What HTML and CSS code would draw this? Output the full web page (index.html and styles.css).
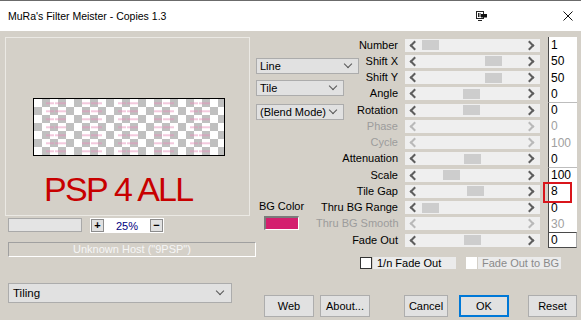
FILE: index.html
```html
<!DOCTYPE html>
<html>
<head>
	<meta charset="utf-8">
	<title>MuRa's Filter Meister - Copies 1.3</title>
	<link rel="stylesheet" href="styles.css">
</head>
<body>
<div class="window">
	<header class="titlebar">
		<span class="title">MuRa's Filter Meister - Copies 1.3</span>
		<svg class="ico-view" width="12" height="12" viewBox="0 0 12 12">
			<rect x="0.5" y="1.5" width="7" height="7" fill="none" stroke="#222"/>
			<path d="M2.5 3v4M4 3v4" stroke="#222"/>
			<rect x="5" y="4" width="6" height="3.5" fill="#111"/>
			<path d="M2 10.5h4" stroke="#222"/>
		</svg>
		<svg class="ico-close" width="10" height="10" viewBox="0 0 10 10">
			<path d="M0.5 0.5l9 9M9.5 0.5l-9 9" stroke="#111" stroke-width="1"/>
		</svg>
	</header>

	<div class="client">
		<section class="left">
			<div class="frame">
				<svg class="preview" width="192" height="58" viewBox="0 0 192 58">
					<defs>
						<pattern id="checker" width="16" height="16" patternUnits="userSpaceOnUse" x="1" y="1">
							<rect width="16" height="16" fill="#fff"/>
							<rect x="8" width="8" height="8" fill="#c0c0c0"/>
							<rect y="8" width="8" height="8" fill="#c0c0c0"/>
						</pattern>
						<pattern id="marks" width="36" height="8" patternUnits="userSpaceOnUse" x="13" y="4.5">
							<rect width="8" height="1.4" fill="#e690b9" opacity="0.7"/>
							<rect x="9" width="11" height="1.4" fill="#e690b9" opacity="0.7"/>
						</pattern>
					</defs>
					<rect x="0.5" y="0.5" width="191" height="57" fill="url(#checker)" stroke="#000"/>
					<rect x="13" y="3" width="176" height="52" fill="url(#marks)"/>
				</svg>
				<div class="logo">PSP 4 ALL</div>
			</div>

			<div class="zoom-row">
				<div class="blank"></div>
				<div class="zoom-box">
					<span class="zbtn">+</span>
					<span class="zval">25%</span>
					<span class="zbtn">&minus;</span>
				</div>
			</div>

			<div class="host">Unknown Host ("9PSP")</div>

			<div class="select tiling">Tiling</div>
		</section>

		<section class="controls">
			<div class="selects">
				<div class="select sel-line">Line</div>
				<div class="select sel-tile">Tile</div>
				<div class="select sel-blend">(Blend Mode)</div>
			</div>

			<div class="bgcolor">
				<span>BG Color</span>
				<span class="swatch"></span>
			</div>

			<span class="lbl">Number</span>
			<div class="track"><span class="thumb" style="left:17px"></span></div>
			<span class="val">1</span>

			<span class="lbl">Shift X</span>
			<div class="track"><span class="thumb" style="left:80px"></span></div>
			<span class="val">50</span>

			<span class="lbl">Shift Y</span>
			<div class="track"><span class="thumb" style="left:80px"></span></div>
			<span class="val">50</span>

			<span class="lbl">Angle</span>
			<div class="track"><span class="thumb" style="left:58px"></span></div>
			<span class="val">0</span>

			<span class="lbl">Rotation</span>
			<div class="track"><span class="thumb" style="left:58px"></span></div>
			<span class="val sep">0</span>

			<span class="lbl off">Phase</span>
			<div class="track off"></div>
			<span class="val off">0</span>

			<span class="lbl off">Cycle</span>
			<div class="track off"></div>
			<span class="val off">100</span>

			<span class="lbl">Attenuation</span>
			<div class="track"><span class="thumb" style="left:59px"></span></div>
			<span class="val">0</span>

			<span class="lbl">Scale</span>
			<div class="track"><span class="thumb" style="left:38px"></span></div>
			<span class="val sep">100</span>

			<span class="lbl">Tile Gap</span>
			<div class="track"><span class="thumb" style="left:62px"></span></div>
			<span class="val marked">8</span>

			<span class="lbl">Thru BG Range</span>
			<div class="track"><span class="thumb" style="left:17px"></span></div>
			<span class="val">0</span>

			<span class="lbl off">Thru BG Smooth</span>
			<div class="track off"></div>
			<span class="val off">30</span>

			<span class="lbl">Fade Out</span>
			<div class="track"><span class="thumb" style="left:59px"></span></div>
			<span class="val boxed">0</span>

			<div class="checks">
				<label class="chk"><span class="box"></span><span class="txt">1/n Fade Out</span></label>
				<label class="chk off"><span class="box"></span><span class="txt">Fade Out to BG</span></label>
			</div>

			<div class="buttons">
				<button class="btn b-web">Web</button>
				<button class="btn b-about">About...</button>
				<button class="btn b-cancel">Cancel</button>
				<button class="btn b-ok">OK</button>
				<button class="btn b-reset">Reset</button>
			</div>
		</section>
	</div>
</div>
</body>
</html>
```

FILE: styles.css
```css
* {
	box-sizing: border-box;
}
body {
	margin: 0;
	font-family: "Liberation Sans", Arial, sans-serif;
	font-size: 11px;
	color: #000;
	background-color: #d4d0c8;
}
.window {
	width: 581px;
	height: 320px;
	overflow: hidden;
	background-color: #d4d0c8;
}

/* title bar */
.titlebar {
	height: 31px;
	display: flex;
	align-items: center;
	background-color: #fff;
	border-top: 1px solid #6b6b6b;
}
.title {
	padding-left: 8px;
	font-size: 10.5px;
	color: #000;
}
.ico-view {
	margin-left: auto;
	margin-right: 75px;
}
.ico-close {
	margin-right: 8px;
}

.client {
	display: flex;
}

/* left side */
.left {
	width: 256px;
	padding: 6px 0 0 5px;
	display: flex;
	flex-direction: column;
}
.frame {
	width: 245px;
	height: 179px;
	border: 1px solid #ebe9e4;
	padding-top: 60px;
	display: flex;
	flex-direction: column;
	align-items: flex-start;
}
.preview {
	display: block;
	margin-left: 27px;
}
.logo {
	margin: 16px 0 0 38px;
	font-size: 34px;
	line-height: 34px;
	letter-spacing: -1.7px;
	color: #c80000;
	white-space: nowrap;
}
.zoom-row {
	display: flex;
	margin: 2px 0 0 3px;
}
.blank {
	width: 74px;
	height: 14px;
	background-color: #e4e4e4;
	border: 1px solid #a9a9a9;
}
.zoom-box {
	width: 74px;
	height: 15px;
	margin-left: 8px;
	background-color: #fff;
	display: flex;
	align-items: center;
	padding: 0 1px;
}
.zbtn {
	width: 13px;
	height: 13px;
	border: 1px solid #8c8c8c;
	background-color: #e1e1e1;
	font-weight: bold;
	font-size: 11px;
	line-height: 11px;
	text-align: center;
}
.zval {
	flex: 1;
	text-align: center;
	color: #000080;
}
.host {
	width: 248px;
	height: 15px;
	margin: 9px 0 0 3px;
	border-top: 1px solid #a0a0a0;
	border-left: 1px solid #a0a0a0;
	border-bottom: 1px solid #fff;
	border-right: 1px solid #fff;
	color: #f6f6f6;
	text-align: center;
	line-height: 13px;
	white-space: nowrap;
}

/* drop downs */
.select {
	height: 16px;
	display: flex;
	align-items: center;
	padding: 0 7px 0 3px;
	background-color: #e1e1e1;
	border: 1px solid #acacac;
	white-space: nowrap;
}
.select::after {
	content: "";
	width: 5px;
	height: 5px;
	margin-left: auto;
	border-right: 1px solid #555;
	border-bottom: 1px solid #555;
	transform: translateY(-2px) rotate(45deg);
}
.tiling {
	width: 224px;
	height: 20px;
	margin: 26px 0 0 3px;
	padding-left: 4px;
	padding-right: 8px;
	font-size: 11.5px;
}

/* right side */
.controls {
	width: 321px;
	padding-top: 6px;
	display: grid;
	grid-template-columns: 60px 89px 143px 29px;
	grid-template-rows: repeat(13, 16.25px);
}
.selects {
	grid-column: 1;
	grid-row: 2 / span 5;
	justify-self: start;
	align-self: start;
	margin-top: 4.75px;
	display: flex;
	flex-direction: column;
	align-items: flex-start;
}
.sel-line {
	width: 103px;
}
.sel-tile {
	width: 88px;
	margin-top: 6px;
}
.sel-blend {
	width: 88px;
	margin-top: 8px;
}
.bgcolor {
	grid-column: 1;
	grid-row: 11 / span 3;
	width: 51px;
	align-self: start;
	display: flex;
	flex-direction: column;
	align-items: center;
	line-height: 12px;
}
.swatch {
	width: 35px;
	height: 14px;
	margin-top: 4.5px;
	background-color: #d41e6e;
	border-top: 2px solid #7a7a7a;
	border-left: 2px solid #7a7a7a;
	border-right: 1px solid #fff;
	border-bottom: 1px solid #fff;
}
.lbl {
	grid-column: 2;
	padding-right: 7px;
	text-align: right;
	white-space: nowrap;
	align-self: center;
	line-height: 13px;
}
.lbl.off {
	color: #9c9c9c;
}
.track {
	grid-column: 3;
	position: relative;
	width: 135px;
	height: 13px;
	align-self: center;
	background-color: #efefef;
	display: flex;
	align-items: center;
	justify-content: space-between;
	padding: 0 7px 0 6px;
}
.track::before,
.track::after {
	content: "";
	width: 5px;
	height: 5px;
	transform: rotate(45deg);
	border: 0 solid #5e5e5e;
}
.track::before {
	border-left-width: 2px;
	border-bottom-width: 2px;
}
.track::after {
	border-top-width: 2px;
	border-right-width: 2px;
}
.track.off::before,
.track.off::after {
	border-color: #b9b9b9;
}
.thumb {
	position: absolute;
	top: 1.5px;
	width: 17px;
	height: 10px;
	background-color: #cdcdcd;
}
.val {
	grid-column: 4;
	position: relative;
	background-color: #fff;
	border-left: 1px solid #4a4a4a;
	padding-left: 2px;
	font-size: 12px;
	line-height: 16px;
}
.val.off {
	color: #a0a0a0;
}
.val.sep {
	border-top: 1px solid #bdbdbd;
	line-height: 15px;
}
.val.boxed {
	border: 1px solid #4a4a4a;
	border-right-color: #a8a8a8;
	line-height: 14px;
}
.val.marked {
	z-index: 1;
}
.val.marked::after {
	content: "";
	position: absolute;
	left: -6px;
	top: -1px;
	width: 25px;
	height: 17px;
	border: 2px solid #d9151b;
}

.checks {
	grid-column: 1 / -1;
	display: flex;
	margin-top: 9px;
	padding-left: 104px;
	height: 12px;
}
.chk {
	display: flex;
	height: 12px;
}
.chk .box {
	width: 12px;
	height: 12px;
	background-color: #fff;
	border: 1px solid #333;
}
.chk .txt {
	width: 83px;
	margin-left: 1px;
	padding-left: 4px;
	background-color: #ebebeb;
	line-height: 12px;
	white-space: nowrap;
}
.chk.off {
	margin-left: 10px;
}
.chk.off .box {
	width: 11px;
	border: 0;
}
.chk.off .txt {
	color: #8a8a8a;
}

.buttons {
	grid-column: 1 / -1;
	display: flex;
	margin-top: 26px;
	padding-left: 8px;
}
.btn {
	height: 22px;
	padding: 0;
	font-family: inherit;
	font-size: 11px;
	color: #000;
	background-color: #e1e1e1;
	border: 1px solid #adadad;
}
.b-web {
	width: 50px;
}
.b-about {
	width: 50px;
	margin-left: 6px;
}
.b-cancel {
	width: 44px;
	margin-left: 34px;
}
.b-ok {
	width: 50px;
	margin-left: 11px;
	border: 2px solid #0078d7;
}
.b-reset {
	width: 49px;
	margin-left: 19px;
}
```
